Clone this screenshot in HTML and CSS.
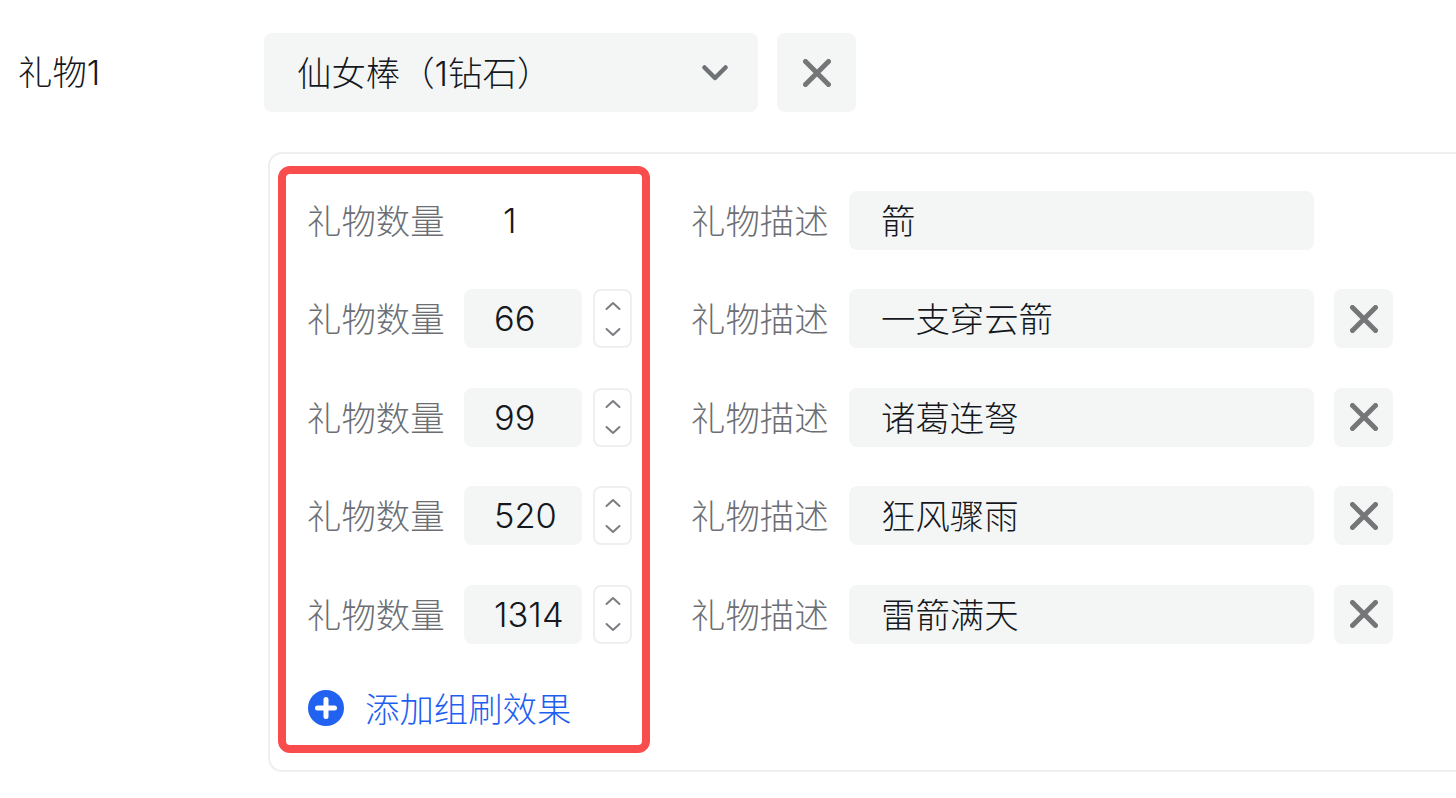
FILE: index.html
```html
<!DOCTYPE html>
<html lang="zh-CN">
<head>
<meta charset="utf-8">
<title>礼物设置</title>
<link rel="stylesheet" href="styles.css">
</head>
<body>
<main class="page">
  <div class="gift-head">
    <div class="gift-name">礼物1</div>
    <div class="select"><span>仙女棒（1钻石）</span>
      <svg class="chevron" viewBox="0 0 26 16"><path d="M2.500 2.500 13 13 23.500 2.500"/></svg>
    </div>
    <button class="close close-lg" type="button"><svg viewBox="0 0 28 28"><path d="M2.500 2.500 25.500 25.500M25.500 2.500 2.500 25.500"/></svg></button>
  </div>
  <section class="panel">
    <div class="count-col">
      <div class="row">
        <span class="label">礼物数量</span><span class="plain">1</span>
      </div>
      <div class="row">
        <span class="label">礼物数量</span><span class="input count">66</span>
        <span class="stepper"><svg viewBox="0 0 16 10"><path d="M1.500 8 8 2 14.500 8"/></svg><svg viewBox="0 0 16 10"><path d="M1.500 2 8 8 14.500 2"/></svg></span>
      </div>
      <div class="row">
        <span class="label">礼物数量</span><span class="input count">99</span>
        <span class="stepper"><svg viewBox="0 0 16 10"><path d="M1.500 8 8 2 14.500 8"/></svg><svg viewBox="0 0 16 10"><path d="M1.500 2 8 8 14.500 2"/></svg></span>
      </div>
      <div class="row">
        <span class="label">礼物数量</span><span class="input count">520</span>
        <span class="stepper"><svg viewBox="0 0 16 10"><path d="M1.500 8 8 2 14.500 8"/></svg><svg viewBox="0 0 16 10"><path d="M1.500 2 8 8 14.500 2"/></svg></span>
      </div>
      <div class="row">
        <span class="label">礼物数量</span><span class="input count">1314</span>
        <span class="stepper"><svg viewBox="0 0 16 10"><path d="M1.500 8 8 2 14.500 8"/></svg><svg viewBox="0 0 16 10"><path d="M1.500 2 8 8 14.500 2"/></svg></span>
      </div>
      <div class="add">
        <svg class="add-icon" viewBox="0 0 36 36"><circle cx="18" cy="18" r="18"/><path d="M18 9.500V26.500M9.500 18H26.500"/></svg>
        <span class="add-text">添加组刷效果</span>
      </div>
    </div>
    <div class="desc-col">
      <div class="row">
        <span class="label">礼物描述</span><span class="input desc">箭</span>
      </div>
      <div class="row">
        <span class="label">礼物描述</span><span class="input desc">一支穿云箭</span>
        <button class="close close-sm" type="button"><svg viewBox="0 0 28 28"><path d="M2.500 2.500 25.500 25.500M25.500 2.500 2.500 25.500"/></svg></button>
      </div>
      <div class="row">
        <span class="label">礼物描述</span><span class="input desc">诸葛连弩</span>
        <button class="close close-sm" type="button"><svg viewBox="0 0 28 28"><path d="M2.500 2.500 25.500 25.500M25.500 2.500 2.500 25.500"/></svg></button>
      </div>
      <div class="row">
        <span class="label">礼物描述</span><span class="input desc">狂风骤雨</span>
        <button class="close close-sm" type="button"><svg viewBox="0 0 28 28"><path d="M2.500 2.500 25.500 25.500M25.500 2.500 2.500 25.500"/></svg></button>
      </div>
      <div class="row">
        <span class="label">礼物描述</span><span class="input desc">雷箭满天</span>
        <button class="close close-sm" type="button"><svg viewBox="0 0 28 28"><path d="M2.500 2.500 25.500 25.500M25.500 2.500 2.500 25.500"/></svg></button>
      </div>
    </div>
  </section>
</main>
</body>
</html>
```
FILE: styles.css
```css
* { box-sizing: border-box; }
html, body { margin: 0; height: 100%; overflow: hidden; background: #fff; }
body {
  font-family: "Inter", "Noto Sans CJK SC", sans-serif;
  font-size: 34.400px;
  font-weight: 300;
  color: #15181d;
}
.page { padding: 33px 0 0 18px; }

.gift-head { display: flex; align-items: flex-start; }
.gift-name { width: 246px; height: 79px; line-height: 79px; }
.select {
  width: 494px; height: 79px; padding: 0 30px 3px 33px;
  display: flex; align-items: center; justify-content: space-between;
  background: #f4f6f6; border-radius: 8px;
}
.chevron { width: 26px; height: 16px; margin-top: 3px; fill: none; stroke: #6f7275; stroke-width: 4.500; stroke-linecap: round; stroke-linejoin: round; }

.close {
  display: flex; align-items: center; justify-content: center;
  padding: 0; border: 0; background: #f4f6f6; border-radius: 8px;
}
.close svg { fill: none; stroke: #747678; stroke-width: 5; stroke-linecap: round; }
.close-lg { width: 79px; height: 79px; margin-left: 19px; }
.close-lg svg { width: 28px; height: 28px; }
.close-sm { width: 59px; height: 59px; margin-left: 20px; }
.close-sm svg { width: 28px; height: 28px; }

.panel {
  display: flex; align-items: flex-start;
  margin: 40px 0 0 250px; height: 620px;
  padding: 12px 0 0 8px;
  border: 2.500px solid #eeefef; border-right: 0; border-radius: 14px 0 0 14px;
}
.count-col {
  flex: none;
  width: 372px; height: 587px; padding: 17px 8px 0 21px;
  border: 8px solid #f94c4c; border-radius: 12px;
  display: flex; flex-direction: column; gap: 39.400px;
}
.desc-col {
  margin-left: 41px; padding-top: 25px;
  display: flex; flex-direction: column; gap: 39.400px;
}
.row { display: flex; align-items: center; height: 59px; }
.label { width: 137px; padding-bottom: 3px; color: #6c6e72; white-space: nowrap; }
.plain { margin-left: 20px; padding-left: 39px; }
.input {
  display: flex; align-items: center; height: 59px; margin-left: 20px;
  background: #f4f6f6; border-radius: 8px; white-space: nowrap;
}
.count { width: 118px; padding-left: 30px; }
.desc { width: 465px; margin-left: 21px; padding: 0 0 3px 32px; }
.stepper {
  width: 39px; height: 59px; margin-left: 11px;
  display: flex; flex-direction: column; align-items: center; justify-content: center; gap: 16px;
  border: 2.500px solid #eeefef; border-radius: 8px;
}
.stepper svg { width: 16px; height: 10px; fill: none; stroke: #7b7d80; stroke-width: 2; stroke-linecap: round; stroke-linejoin: round; }

.add { display: flex; align-items: center; gap: 21px; height: 59px; margin: -4px 0 0 1px; color: #1f5ff0; }
.add-text { padding-bottom: 3px; }
.add-icon { width: 36px; height: 36px; flex: none; }
.add-icon circle { fill: #2162f0; }
.add-icon path { fill: none; stroke: #fff; stroke-width: 5; stroke-linecap: round; }
```
